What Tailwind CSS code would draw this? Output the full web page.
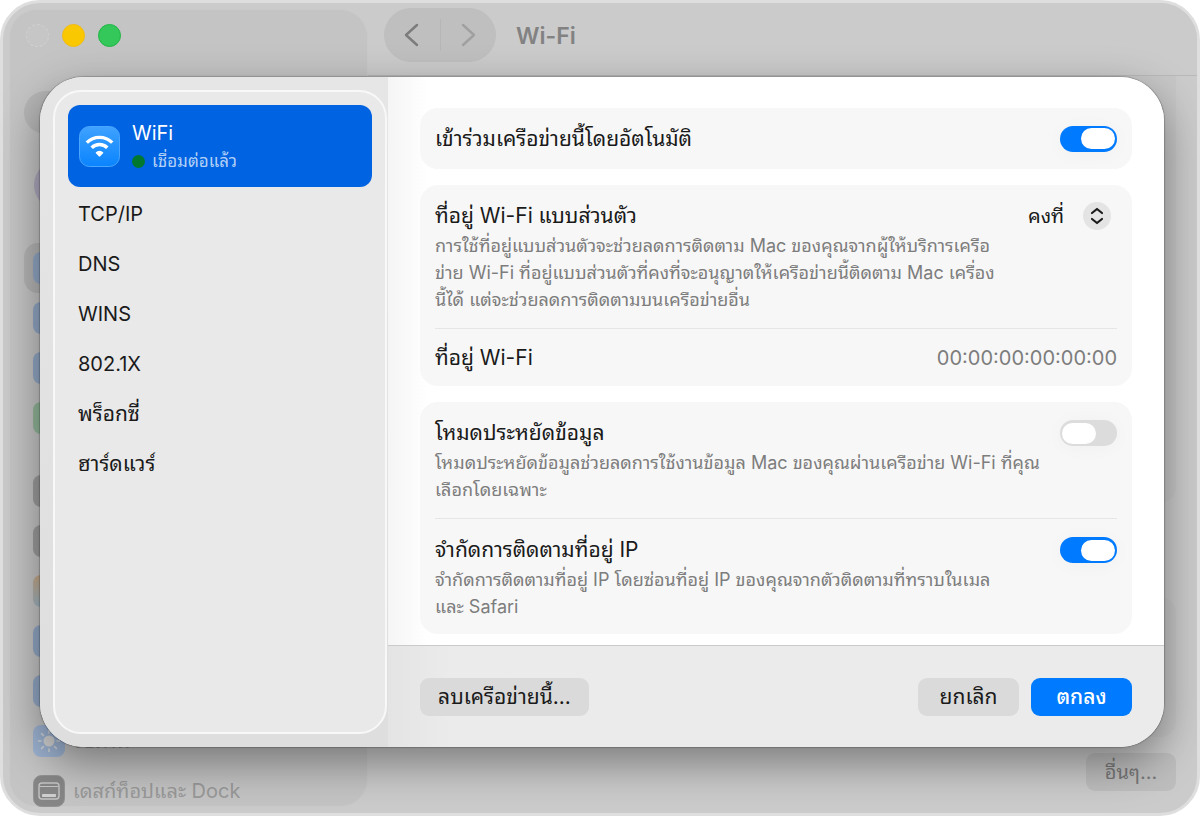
<!DOCTYPE html>
<html lang="th">
<head>
    <meta charset="UTF-8">
    <meta name="viewport" content="width=device-width, initial-scale=1.0">
    <title>Wi-Fi</title>
    <script src="https://cdn.jsdelivr.net/npm/@tailwindcss/browser@4"></script>
</head>
<body class="bg-white font-['Inter','Noto_Sans_Thai_Looped','Loma','Garuda','Waree','Noto_Sans',sans-serif] text-xl text-[#1a1a1a]">

    <!-- Settings window -->
    <div class="relative flex h-screen min-h-[700px] overflow-hidden rounded-[40px] border-[3px] border-[#dedede] bg-[#cbcbcb]">

        <!-- Window sidebar -->
        <aside class="my-1.5 ml-1.5 flex w-[359px] shrink-0 flex-col rounded-[28px] border border-[#cacaca] bg-[#c4c4c4] pl-[14px]">
            <div class="mt-[14px] ml-0.5 flex gap-[13px]">
                <span class="size-[23px] rounded-full border border-dashed border-[#d0d0d0] bg-[#c6c6c6]"></span>
                <span class="size-[23px] rounded-full border border-[#f0bb10] bg-[#fac800]"></span>
                <span class="size-[23px] rounded-full border border-[#1fb544] bg-[#34c759]"></span>
            </div>
            <div class="mt-11 h-[43px] shrink-0 rounded-full bg-[#b6b6b6]"></div>
            <div class="mt-[26px] ml-2.5 size-[50px] shrink-0 rounded-full bg-[#aca6bc]"></div>
            <ul class="mt-[33px] flex flex-col">
                <li class="flex h-[50px] items-center rounded-[14px] bg-[#b4b4b4] pl-[9px]"><span class="size-8 rounded-lg bg-[#92a7c4]"></span></li>
                <li class="flex h-[50px] items-center pl-[9px]"><span class="size-8 rounded-lg bg-[#92a7c4]"></span></li>
                <li class="flex h-[50px] items-center pl-[9px]"><span class="size-8 rounded-lg bg-[#92a7c4]"></span></li>
                <li class="flex h-[50px] items-center pl-[9px]"><span class="size-8 rounded-lg bg-[#92b698]"></span></li>
            </ul>
            <ul class="mt-[23px] flex flex-col text-[#999999]">
                <li class="flex h-[50px] items-center pl-[9px]"><span class="size-8 rounded-lg bg-[#9c9c9c]"></span></li>
                <li class="flex h-[50px] items-center pl-[9px]"><span class="size-8 rounded-lg bg-[#9c9c9c]"></span></li>
                <li class="flex h-[50px] items-center pl-[9px]"><span class="size-8 rounded-lg bg-linear-to-b from-[#c4a888] to-[#9eb4c0]"></span></li>
                <li class="flex h-[50px] items-center pl-[9px]"><span class="size-8 rounded-lg bg-[#92a7c4]"></span></li>
                <li class="flex h-[50px] items-center pl-[9px]"><span class="size-8 rounded-lg bg-[#92a7c4]"></span></li>
                <li class="flex h-[50px] items-center gap-2 pl-[9px]">
                    <svg class="size-8" viewBox="0 0 32 32" fill="none">
                        <rect width="32" height="32" rx="8" fill="#9db3d2"/>
                        <circle cx="16" cy="16" r="5.5" fill="#d4d4d4"/>
                        <path d="M16 5.5v2.5M16 24v2.5M5.500 16H8M24 16h2.500M8.600 8.600l1.800 1.800M21.600 21.600l1.800 1.800M8.600 23.400l1.800-1.800M21.600 10.400l1.800-1.800" stroke="#d0d4d8" stroke-width="1.600" stroke-linecap="round"/>
                    </svg>
                    <span>จอภาพ</span>
                </li>
                <li class="flex h-[50px] items-center gap-2 pl-[9px]">
                    <svg class="size-8" viewBox="0 0 32 32" fill="none">
                        <rect x=".5" y=".5" width="31" height="31" rx="8" fill="#868686" stroke="#929292"/>
                        <rect x="6" y="8" width="20" height="16" rx="3" stroke="#c4c4c4" stroke-width="1.400"/>
                        <path d="M6.500 11.500h19" stroke="#c4c4c4"/>
                        <rect x="9" y="19" width="14" height="3" rx=".8" fill="#cfcfcf"/>
                    </svg>
                    <span>เดสก์ท็อปและ Dock</span>
                </li>
            </ul>
        </aside>

        <!-- Window content -->
        <div class="flex min-w-0 flex-1 flex-col">
            <header class="flex h-[73px] shrink-0 items-start border-b border-[#b9b9b9] bg-[#cbcbcb] pt-[5px] pl-4">
                <nav class="flex h-[54px] w-28 items-center rounded-full bg-[#bfbfbf]">
                    <button type="button" aria-label="ย้อนกลับ" class="flex h-full flex-1 items-center justify-center">
                        <svg class="h-6 w-4" viewBox="0 0 16 24" fill="none" stroke="#7c7c7c" stroke-width="2.400" stroke-linecap="round" stroke-linejoin="round"><path d="M13 2 2 12l11 10"/></svg>
                    </button>
                    <span class="h-8 w-px bg-[#b6b6b6]"></span>
                    <button type="button" aria-label="ไปข้างหน้า" class="flex h-full flex-1 items-center justify-center">
                        <svg class="h-6 w-4" viewBox="0 0 16 24" fill="none" stroke="#a0a0a0" stroke-width="2.400" stroke-linecap="round" stroke-linejoin="round"><path d="m3 2 11 10L3 22"/></svg>
                    </button>
                </nav>
                <h1 class="ml-5 text-[23px] leading-14 font-semibold text-[#828282]">Wi-Fi</h1>
            </header>
            <div class="flex flex-1 flex-col pr-[21px] pb-[22px] pl-5">
                <div class="flex-1 rounded-b-2xl bg-[#c7c7c7]"></div>
                <div class="mt-[94px] h-[140px] rounded-2xl bg-[#c7c7c7]"></div>
                <button type="button" class="mt-4 h-[38px] w-[90px] self-end rounded-[9px] bg-[#bebebe] text-[#777777]">อื่นๆ...</button>
            </div>
        </div>

        <!-- Network details sheet -->
        <div role="dialog" aria-label="Wi-Fi" class="absolute top-[74px] right-[33px] bottom-[66px] left-[37px] flex overflow-hidden rounded-[44px] bg-white shadow-[0_0_1px_1px_rgba(0,0,0,0.2),0_16px_44px_rgba(0,0,0,0.4)]">

            <div class="flex w-[348px] shrink-0 bg-linear-to-b from-[#e6e6e6] to-[#dedede] py-[13px] pr-px pl-[13px]">
                <nav class="flex-1 rounded-[28px] border-2 border-[#f8f8f8] bg-[#e9e9e9] p-[13px]">
                    <a href="#wifi" class="mb-0.5 flex h-[82px] items-center gap-3 rounded-xl bg-[#0063e1] px-[11px] text-white">
                        <svg class="size-[41px]" viewBox="0 0 41 41" fill="none">
                            <defs>
                                <linearGradient id="wifiTile" x1="0" y1="0" x2="0" y2="1">
                                    <stop stop-color="#3fa2ff"/>
                                    <stop offset="1" stop-color="#0a84ff"/>
                                </linearGradient>
                            </defs>
                            <rect x=".5" y=".5" width="40" height="40" rx="10" fill="url(#wifiTile)" stroke="#4ba6ff"/>
                            <path d="M7.800 16.600a18 18 0 0 1 25.400 0" stroke="#fff" stroke-width="3.400"/>
                            <path d="M12.700 21.800a11 11 0 0 1 15.600 0" stroke="#fff" stroke-width="3.400"/>
                            <path d="M16.900 26.300a5 5 0 0 1 7.200 0c.3.300.3.700 0 1l-2.900 3a1 1 0 0 1-1.400 0l-2.900-3c-.3-.3-.3-.7 0-1Z" fill="#fff"/>
                        </svg>
                        <span class="flex flex-col pt-0.5">
                            <span class="leading-7">WiFi</span>
                            <span class="flex items-center gap-[7px] text-[17px] leading-7 text-[#b3d0f6]">
                                <span class="size-[13px] rounded-full bg-[#00782f]"></span>
                                เชื่อมต่อแล้ว
                            </span>
                        </span>
                    </a>
                    <a href="#tcpip" class="flex h-[50px] items-center px-2.5">TCP/IP</a>
                    <a href="#dns" class="flex h-[50px] items-center px-2.5">DNS</a>
                    <a href="#wins" class="flex h-[50px] items-center px-2.5">WINS</a>
                    <a href="#8021x" class="flex h-[50px] items-center px-2.5">802.1X</a>
                    <a href="#proxies" class="flex h-[50px] items-center px-2.5 text-[21px]">พร็อกซี่</a>
                    <a href="#hardware" class="flex h-[50px] items-center px-2.5 text-[21px]">ฮาร์ดแวร์</a>
                </nav>
            </div>

            <div class="flex min-w-0 flex-1 flex-col">
                <main class="flex flex-1 flex-col gap-4 overflow-hidden bg-linear-to-r from-[#f5f5f5] to-white to-5% px-8 pt-[31px]">

                    <section class="flex h-[61px] shrink-0 items-center justify-between rounded-[18px] bg-[#f7f7f7] px-[15px]">
                        <label for="autoJoin" class="text-[21px]">เข้าร่วมเครือข่ายนี้โดยอัตโนมัติ</label>
                        <input type="checkbox" id="autoJoin" checked class="flex h-[26px] w-[57px] appearance-none items-center rounded-full bg-[#dcdcdc] px-0.5 shadow-[0_2px_20px_rgba(0,0,0,0.03)] before:h-[21px] before:w-[34px] before:rounded-full before:bg-white checked:justify-end checked:bg-[#007aff]">
                    </section>

                    <section class="shrink-0 rounded-[18px] bg-[#f7f7f7] px-[15px]">
                        <div class="border-b border-[#e6e6e6] py-[15px]">
                            <div class="flex h-8 items-center justify-between">
                                <label for="privateAddress" class="text-[21px]">ที่อยู่ Wi-Fi แบบส่วนตัว</label>
                                <div class="mr-1.5 grid items-center">
                                    <select id="privateAddress" class="col-start-1 row-start-1 appearance-none pr-[46px]">
                                        <option>คงที่</option>
                                    </select>
                                    <svg class="pointer-events-none col-start-1 row-start-1 size-7 justify-self-end" viewBox="0 0 28 28" fill="none">
                                        <circle cx="14" cy="14" r="14" fill="#e4e4e4"/>
                                        <path d="m9 11 5-4 5 4M9 17l5 4 5-4" stroke="#1a1a1a" stroke-width="2.200" stroke-linecap="round" stroke-linejoin="round"/>
                                    </svg>
                                </div>
                            </div>
                            <p class="text-lg leading-[27px] whitespace-nowrap text-[#7d7d7d]">การใช้ที่อยู่แบบส่วนตัวจะช่วยลดการติดตาม Mac ของคุณจากผู้ให้บริการเครือ<br>ข่าย Wi-Fi ที่อยู่แบบส่วนตัวที่คงที่จะอนุญาตให้เครือข่ายนี้ติดตาม Mac เครื่อง<br>นี้ได้ แต่จะช่วยลดการติดตามบนเครือข่ายอื่น</p>
                        </div>
                        <div class="flex h-[57px] items-center justify-between">
                            <span class="text-[21px]">ที่อยู่ Wi-Fi</span>
                            <span class="text-[#7d7d7d]">00:00:00:00:00:00</span>
                        </div>
                    </section>

                    <section class="shrink-0 rounded-[18px] bg-[#f7f7f7] px-[15px]">
                        <div class="border-b border-[#e6e6e6] py-[15px]">
                            <div class="flex h-8 items-center justify-between">
                                <label for="lowData" class="text-[21px]">โหมดประหยัดข้อมูล</label>
                                <input type="checkbox" id="lowData" class="flex h-[26px] w-[57px] appearance-none items-center rounded-full bg-[#dcdcdc] px-0.5 shadow-[0_2px_20px_rgba(0,0,0,0.03)] before:h-[21px] before:w-[34px] before:rounded-full before:bg-white checked:justify-end checked:bg-[#007aff]">
                            </div>
                            <p class="text-lg leading-[27px] whitespace-nowrap text-[#7d7d7d]">โหมดประหยัดข้อมูลช่วยลดการใช้งานข้อมูล Mac ของคุณผ่านเครือข่าย Wi-Fi ที่คุณ<br>เลือกโดยเฉพาะ</p>
                        </div>
                        <div class="pt-[15px] pb-[14px]">
                            <div class="flex h-8 items-center justify-between">
                                <label for="limitTracking" class="text-[21px]">จำกัดการติดตามที่อยู่ IP</label>
                                <input type="checkbox" id="limitTracking" checked class="flex h-[26px] w-[57px] appearance-none items-center rounded-full bg-[#dcdcdc] px-0.5 shadow-[0_2px_20px_rgba(0,0,0,0.03)] before:h-[21px] before:w-[34px] before:rounded-full before:bg-white checked:justify-end checked:bg-[#007aff]">
                            </div>
                            <p class="text-lg leading-[27px] whitespace-nowrap text-[#7d7d7d]">จำกัดการติดตามที่อยู่ IP โดยซ่อนที่อยู่ IP ของคุณจากตัวติดตามที่ทราบในเมล<br>และ Safari</p>
                        </div>
                    </section>
                </main>

                <footer class="flex h-[102px] shrink-0 items-center gap-3 border-t border-[#cacaca] bg-linear-to-r from-[#e4e4e4] to-[#ebebeb] to-8% px-8">
                    <button type="button" class="mr-auto h-[38px] w-[169px] rounded-[9px] bg-[#dadada] text-[21px]">ลบเครือข่ายนี้...</button>
                    <button type="button" class="h-[38px] w-[101px] rounded-[9px] bg-[#dadada] text-[21px]">ยกเลิก</button>
                    <button type="button" class="h-[38px] w-[101px] rounded-[9px] bg-[#007aff] text-[21px] font-medium text-white">ตกลง</button>
                </footer>
            </div>
        </div>
    </div>

</body>
</html>
